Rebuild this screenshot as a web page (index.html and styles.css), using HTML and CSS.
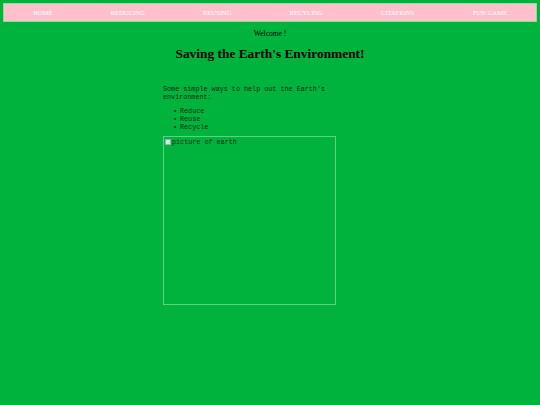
FILE: index.html
```html
<!DOCTYPE html>
<html lang="en">
<head>
    <meta charset="UTF-8">
    <meta name="viewport" content="width=device-width, initial-scale=1.0">
    <title>Saving the Earth's Environment</title>
    <link rel="stylesheet" href="styles.css">
</head>
<body>
    <nav class="navbar">
        <a href="#">HOME</a>
        <a href="#">REDUCING</a>
        <a href="#">REUSING</a>
        <a href="#">RECYLING</a>
        <a href="#">CITATIONS</a>
        <a href="#">FUN GAME</a>
    </nav>

    <p class="welcome">Welcome !</p>
    <h1>Saving the Earth's Environment!</h1>

    <div class="content">
        <p class="intro">Some simple ways to help out the Earth's environment:</p>
        <ul class="ways">
            <li>Reduce</li>
            <li>Reuse</li>
            <li>Recycle</li>
        </ul>
        <div class="earth-pic">
            <span class="broken-icon"></span>picture of earth
        </div>
    </div>
</body>
</html>
```

FILE: styles.css
```css
* {
    margin: 0;
    padding: 0;
    box-sizing: border-box;
}

body {
    font-family: "Liberation Serif", "Times New Roman", serif;
    background: #00b33c;
    color: #000;
    padding: 3px;
    min-height: 100vh;
}

.navbar {
    display: flex;
    justify-content: space-around;
    align-items: center;
    height: 19px;
    background: #ffc0cb;
    border: 1px solid #8fdb9f;
}

.navbar a {
    color: #fff;
    text-decoration: none;
    font-size: 6.6px;
}

.welcome {
    text-align: center;
    font-size: 7.5px;
    margin-top: 7px;
}

h1 {
    text-align: center;
    font-size: 13.4px;
    font-weight: bold;
    margin-top: 8px;
}

.content {
    width: 173px;
    margin: 24px 0 0 160px;
    font-family: "Liberation Mono", "Courier New", monospace;
    font-size: 6.75px;
    line-height: 7.5px;
    color: #0a2a12;
}

.ways {
    list-style: none;
    margin: 6px 0 5px 10px;
    line-height: 8px;
}

.ways li::before {
    content: "•";
    display: inline-block;
    width: 7px;
}

.earth-pic {
    height: 169px;
    border: 1px solid #5fd27f;
    padding: 2px 1px;
}

.broken-icon {
    display: inline-block;
    width: 6px;
    height: 6px;
    background: #d8e8e0;
    border: 1px solid #9ab;
    margin-right: 1px;
    vertical-align: -1px;
}
```
